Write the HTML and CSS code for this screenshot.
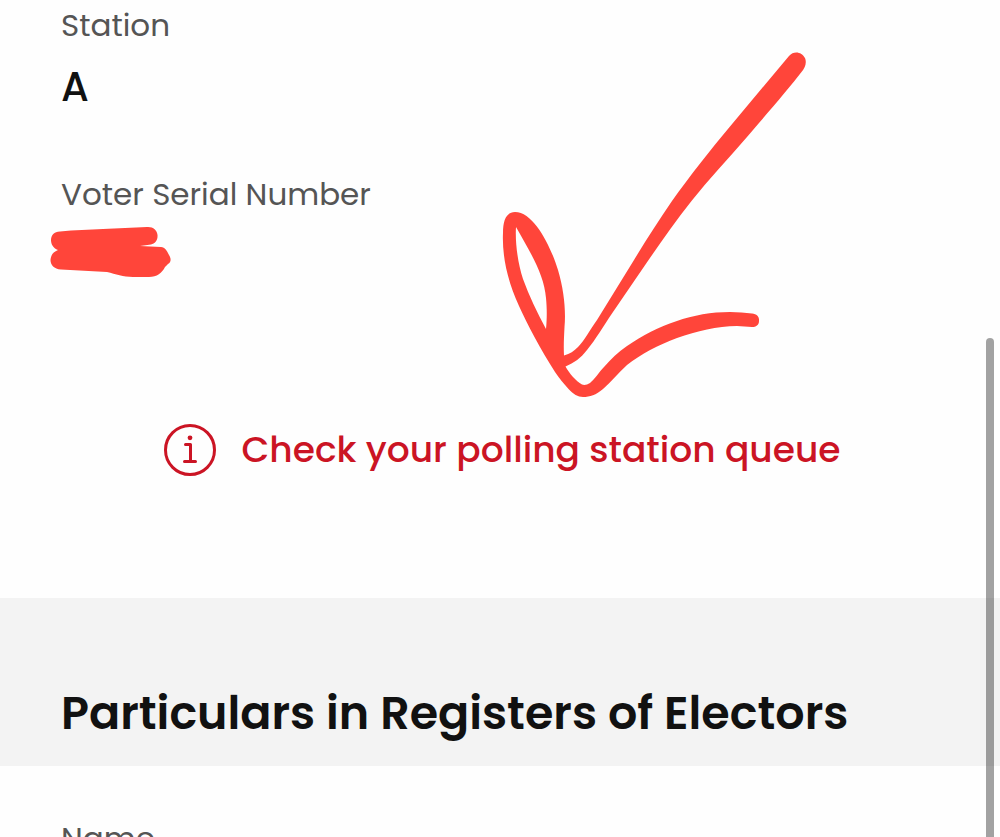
FILE: index.html
```
<!DOCTYPE html>
<html lang="en">
<head>
  <meta charset="UTF-8">
  <meta name="viewport" content="width=device-width, initial-scale=1.0">
  <title>Polling Station</title>
  <link rel="stylesheet" href="styles.css">
</head>
<body>
  <main class="page">
    <section class="station">
      <dl class="details">
        <div class="field">
          <dt>Station</dt>
          <dd>A</dd>
        </div>
        <div class="field">
          <dt>Voter Serial Number</dt>
          <dd>
            <svg class="scribble" viewBox="50 226 122 52" aria-hidden="true">
              <path d="M60 231.500C75 230 89 230 103 229L147 227C153 226.500 157 230 157.500 235C158 240 155 244 151 244.500L140 246L161 247C165 247 167 251 169 255C171.500 259 171 262 168 264L165 267C162 273 157 277 149 277H133C123 277 116 274 107 272L61 269.500C54 269 50.500 265 50.500 260C51 255 53 252 58 250C53 248 51 244 51 240C51 235 54 232 60 231.500Z"/>
            </svg>
          </dd>
        </div>
      </dl>
      <a class="queue-link" href="#queue">
        <svg class="info-icon" viewBox="0 0 52 52" aria-hidden="true">
          <circle cx="26" cy="26" r="24.500"/>
          <path d="M21.500 20.500H26.500V37M20.500 37.500H31.500"/>
          <circle class="dot" cx="26" cy="13.800" r="2.400"/>
        </svg>
        <span>Check your polling station queue</span>
      </a>
    </section>

    <h2 class="section-title">Particulars in Registers of Electors</h2>

    <section class="particulars">
      <dl class="details">
        <div class="field">
          <dt>Name</dt>
        </div>
      </dl>
    </section>

    <!-- hand drawn arrow pointing at the queue link -->
    <svg class="arrow" viewBox="500 50 310 350" aria-hidden="true">
      <path fill-rule="evenodd" d="M789 56C794 50 802 52 805 58C807 63 805 68 801.500 72C790 87 766 115 747 137C728 159 709 179 691.500 201C675 222 661 242 646.500 263L613 312C602 328 596 339 587 350C581 358 574 363 565.500 366.500C569 373 576 381 582 384.500C584 385.500 587 385 590 383C595 379 599 372 604 367C611 359 618 352 627 346C658 325 693 312 730 312C738 312 745 313 752 313.500C757 314 759.500 317 759 321C759 325 756 327 752 327L737 326C717 326 697 331 677 338C658 345 641 354 627 365C618 373 611 382 603 389C596 395 590 397 583 397C578 397 573 394 569 389.500C564 384 559 378 555 372C541 350 527 324 519 306C507 280 502 255 503 233C503 219 507 212 515 212C535 212 552 250 558 270C564 290 566 311 564.500 327C564 337 563.500 346 564 355.500C570 354 574 351 578 347C584 341 590 330 597 320L634 260C646 240 659 220 672 201C689 177 711 149 730 126.500ZM516 227C515 243 518 264 523 279C529 296 537 312 546 329C547 318 547 309 546 298C544 275 532 255 516 227Z"/>
    </svg>
    <div class="scroll-thumb"></div>
  </main>
</body>
</html>
```
FILE: styles.css
```
* {
  box-sizing: border-box;
  margin: 0;
  padding: 0;
}

body {
  font-family: Poppins, Inter, sans-serif;
  background: #fefefe;
  color: #111;
}

.page {
  position: relative;
  height: 100vh;
  overflow: hidden;
}

.station {
  padding: 3px 57px 120px 61px;
}

.details {
  display: flex;
  flex-direction: column;
  gap: 55px;
}

.field {
  display: flex;
  flex-direction: column;
  gap: 10px;
}

dt {
  font-size: 31px;
  line-height: 44px;
  color: #555;
}

dd {
  position: relative;
  height: 60px;
  font-size: 40px;
  font-weight: 500;
  line-height: 60px;
}

.scribble {
  position: absolute;
  left: -11px;
  top: 0;
  width: 122px;
  fill: #ff453a;
}

.queue-link {
  display: flex;
  justify-content: center;
  align-items: center;
  gap: 26px;
  margin-top: 136px;
  color: #cb1424;
  font-size: 36px;
  font-weight: 500;
  line-height: 56px;
  text-decoration: none;
}

.info-icon {
  width: 52px;
  height: 52px;
  flex-shrink: 0;
  fill: none;
  stroke: currentColor;
  stroke-width: 3;
  stroke-linecap: round;
  stroke-linejoin: round;
}

.info-icon .dot {
  fill: currentColor;
  stroke: none;
}

.section-title {
  padding: 80px 61px 18px;
  background: #f3f3f3;
  font-size: 46px;
  font-weight: 600;
  line-height: 70px;
}

.particulars {
  padding: 50px 61px;
}

.arrow {
  position: absolute;
  left: 500px;
  top: 50px;
  width: 310px;
  fill: #ff453a;
}

.scroll-thumb {
  position: absolute;
  top: 338px;
  right: 6px;
  bottom: 0;
  width: 8px;
  border-radius: 4px 4px 0 0;
  background: rgba(0, 0, 0, 0.36);
}
```
